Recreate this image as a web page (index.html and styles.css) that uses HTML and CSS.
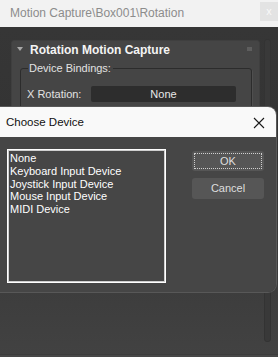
FILE: index.html
```html
<!DOCTYPE html>
<html>
<head>
<meta charset="utf-8">
<link rel="stylesheet" href="styles.css">
</head>
<body>
<div class="window">
  <div class="titlebar">
    <span class="title">Motion Capture\Box001\Rotation</span>
    <span class="close-btn">x</span>
  </div>
  <div class="workspace">
    <div class="panel-row">
      <div class="rollout">
        <div class="rollout-head">
          <span class="tri"></span>
          <span class="rollout-title">Rotation Motion Capture</span>
          <span class="grip"></span>
        </div>
        <fieldset class="group">
          <legend>Device Bindings:</legend>
          <div class="bind-row">
            <span class="bind-label">X Rotation:</span>
            <span class="bind-btn">None</span>
          </div>
        </fieldset>
      </div>
      <div class="scrollbar"></div>
    </div>
    <div class="footer"></div>

    <div class="dialog">
      <div class="dlg-title">
        <span>Choose Device</span>
        <svg class="dlg-close" width="12" height="12" viewBox="0 0 12 12"><path d="M1 1 L11 11 M11 1 L1 11" stroke="#1a1a1a" stroke-width="1.1" fill="none"/></svg>
      </div>
      <div class="dlg-body">
        <div class="listbox">
          <div class="item">None</div>
          <div class="item">Keyboard Input Device</div>
          <div class="item">Joystick Input Device</div>
          <div class="item">Mouse Input Device</div>
          <div class="item">MIDI Device</div>
        </div>
        <div class="buttons">
          <div class="btn btn-ok"><span>OK</span></div>
          <div class="btn">Cancel</div>
        </div>
      </div>
    </div>
  </div>
</div>
</body>
</html>
```
FILE: styles.css
```css
* { box-sizing: border-box; }
html, body { margin: 0; padding: 0; }
body {
  width: 278px;
  height: 357px;
  overflow: hidden;
  font-family: "Liberation Sans", Arial, sans-serif;
  background: #3a3a3a;
}
.window { width: 278px; height: 357px; display: flex; flex-direction: column; }
.titlebar {
  height: 27px;
  background: #f2f2f2;
  display: flex;
  align-items: center;
  justify-content: space-between;
  padding-left: 10px;
}
.title { font-size: 12px; color: #8c8c8c; line-height: 14px; margin-top: -2px; }
.close-btn {
  width: 18px;
  height: 19px;
  margin-top: -4px;
  background: #e3e3e3;
  color: #f8f8f8;
  font-size: 11px;
  line-height: 18px;
  text-align: center;
}
.workspace {
  position: relative;
  flex: 1;
  background: linear-gradient(#363636, #333 40%, #424242);
  display: flex;
  flex-direction: column;
}
.panel-row {
  display: flex;
  gap: 4px;
  padding: 12px 0 0 11px;
  flex: 1;
}
.rollout {
  width: 249px;
  height: 170px;
  margin-top: 1px;
  background: #454545;
  border: 1px solid #3f3f3f;
  border-radius: 3px;
}
.rollout-head {
  height: 18px;
  display: flex;
  align-items: center;
  position: relative;
}
.tri {
  width: 0; height: 0;
  margin-left: 5px;
  margin-top: -2px;
  border-left: 3px solid transparent;
  border-right: 3px solid transparent;
  border-top: 4px solid #a8a8a8;
}
.rollout-title {
  margin-left: 7px;
  font-size: 12px;
  font-weight: bold;
  color: #f4f4f4;
  line-height: 14px;
}
.grip {
  margin-left: auto;
  margin-right: 7px;
  margin-top: -3px;
  width: 5px;
  height: 4px;
  background-image: radial-gradient(circle, #7a7a7a 0.6px, transparent 0.8px);
  background-size: 2px 2px;
}
.group {
  margin: 2px 7px 0 8px;
  padding: 0 6px 0 6px;
  height: 140px;
  border: 1px solid #2c2c2c;
  border-radius: 3px;
  box-shadow: 1px 1px 0 #4f4f4f;
}
.group legend {
  padding: 0 2px 0 1px;
  margin-left: 1px;
  font-size: 11px;
  line-height: 14px;
  color: #e2e2e2;
}
.bind-row { display: flex; align-items: center; margin-top: 11px; }
.bind-label { font-size: 11px; color: #e2e2e2; width: 64px; }
.bind-btn {
  width: 145px;
  height: 16px;
  background: #2d2d2d;
  border-radius: 2px;
  color: #e8e8e8;
  font-size: 11px;
  line-height: 16px;
  text-align: center;
}
.scrollbar {
  width: 7px;
  height: 303px;
  background: #393939;
  border: 1px solid #333;
  border-radius: 3px;
}
.footer {
  height: 3px;
  background: #474747;
  border-top: 1px solid #3c3c3c;
}
.dialog {
  position: absolute;
  top: 80px;
  left: -10px;
  width: 286px;
  border-radius: 8px;
  overflow: hidden;
  box-shadow: 0 0 0 1px #585858;
}
.dlg-title {
  height: 30px;
  background: #f9f9f9;
  display: flex;
  align-items: center;
  justify-content: space-between;
  padding: 0 11px 0 16px;
  font-size: 11.5px;
  color: #111;
}
.dlg-close { margin-top: 2px; }
.dlg-body {
  background: #464646;
  display: flex;
  gap: 26px;
  padding: 12px 0 9px 17px;
}
.listbox {
  width: 159px;
  height: 134px;
  border: 1px solid #ffffff;
  box-shadow: inset 0 0 0 1px #cfcfcf;
  padding: 2px 2px;
}
.item {
  font-size: 11px;
  line-height: 12.8px;
  color: #ffffff;
}
.buttons {
  display: flex;
  flex-direction: column;
  gap: 7px;
  margin-top: 2px;
}
.btn {
  width: 72px;
  height: 21px;
  background: #565656;
  border-radius: 3px;
  color: #dedede;
  font-size: 11px;
  line-height: 21px;
  text-align: center;
}
.btn-ok {
  height: 20px;
  padding: 2px;
}
.btn-ok span {
  display: block;
  height: 16px;
  line-height: 15px;
  border: 1px dotted #cfcfcf;
}
```
